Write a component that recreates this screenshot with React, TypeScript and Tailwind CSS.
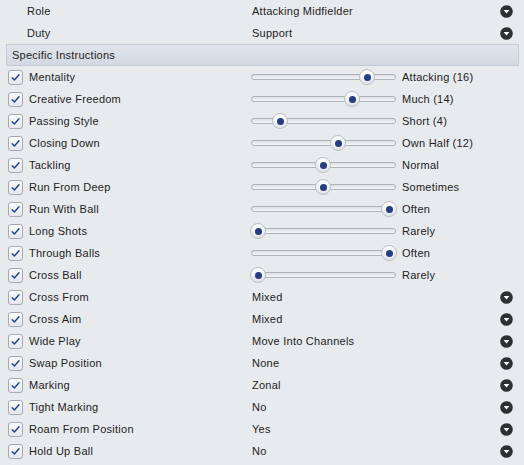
import React from "react";

type Row =
  | { kind: "slider"; label: string; pos: number; text: string }
  | { kind: "select"; label: string; text: string };

const rows: Row[] = [
  { kind: "slider", label: "Mentality", pos: 367, text: "Attacking (16)" },
  { kind: "slider", label: "Creative Freedom", pos: 352, text: "Much (14)" },
  { kind: "slider", label: "Passing Style", pos: 280, text: "Short (4)" },
  { kind: "slider", label: "Closing Down", pos: 338, text: "Own Half (12)" },
  { kind: "slider", label: "Tackling", pos: 323, text: "Normal" },
  { kind: "slider", label: "Run From Deep", pos: 323, text: "Sometimes" },
  { kind: "slider", label: "Run With Ball", pos: 389, text: "Often" },
  { kind: "slider", label: "Long Shots", pos: 258, text: "Rarely" },
  { kind: "slider", label: "Through Balls", pos: 389, text: "Often" },
  { kind: "slider", label: "Cross Ball", pos: 258, text: "Rarely" },
  { kind: "select", label: "Cross From", text: "Mixed" },
  { kind: "select", label: "Cross Aim", text: "Mixed" },
  { kind: "select", label: "Wide Play", text: "Move Into Channels" },
  { kind: "select", label: "Swap Position", text: "None" },
  { kind: "select", label: "Marking", text: "Zonal" },
  { kind: "select", label: "Tight Marking", text: "No" },
  { kind: "select", label: "Roam From Position", text: "Yes" },
  { kind: "select", label: "Hold Up Ball", text: "No" },
];

function DropIcon() {
  return (
    <svg width="13" height="13" viewBox="0 0 13 13" className="shrink-0">
      <circle cx="6.5" cy="6.5" r="6.3" fill="#2e2f31" />
      <path d="M3.6 5 L9.4 5 L6.5 8.6 Z" fill="#ffffff" />
    </svg>
  );
}

function Check() {
  return (
    <div className="w-[15px] h-[15px] shrink-0 rounded-[3px] border border-[#a3aab3] bg-gradient-to-b from-[#fbfcfd] to-[#e4e7eb] flex items-center justify-center">
      <svg width="11" height="11" viewBox="0 0 11 11">
        <path d="M2.2 5.8 L4.4 8 L9 2.8" fill="none" stroke="#27468a" strokeWidth="1.5" strokeLinecap="round" strokeLinejoin="round" />
      </svg>
    </div>
  );
}

function Slider({ pos }: { pos: number }) {
  const left = pos - 251;
  return (
    <div className="relative w-[145px] h-[16px] shrink-0">
      <div className="absolute left-0 right-0 top-[5px] h-[6px] rounded-full border border-[#aeb3b9] bg-gradient-to-b from-[#dcdfe3] to-[#f5f6f8]" />
      <div
        className="absolute top-0 w-[16px] h-[16px] -ml-[8px] rounded-full border border-[#b9bec5] bg-gradient-to-b from-[#ffffff] to-[#e1e4e8] flex items-center justify-center"
        style={{ left }}
      >
        <div className="w-[7px] h-[7px] rounded-full bg-[#233f80]" />
      </div>
    </div>
  );
}

export default function App() {
  return (
    <div
      className="w-[524px] h-[465px] bg-[#e8ebee] text-[#222222] text-[11px] tracking-[0.25px] overflow-hidden"
      style={{ fontFamily: '"Liberation Sans", Arial, sans-serif' }}
    >
      <div className="flex h-[22px] items-center">
        <div className="w-[252px] pl-[27px]">Role</div>
        <div className="flex-1">Attacking Midfielder</div>
        <div className="mr-[11px]"><DropIcon /></div>
      </div>
      <div className="flex h-[22px] items-center">
        <div className="w-[252px] pl-[27px]">Duty</div>
        <div className="flex-1">Support</div>
        <div className="mr-[11px]"><DropIcon /></div>
      </div>
      <div className="ml-[6px] mr-[5px] h-[22px] flex items-center pl-[5px] border border-[#c5ccd5] bg-gradient-to-b from-[#e0e5eb] to-[#d2d9e2]">
        Specific Instructions
      </div>
      {rows.map((r, i) => (
        <div key={i} className="flex h-[22px] items-center">
          <div className="w-[251px] flex items-center pl-[8px] gap-[6px]">
            <Check />
            <span>{r.label}</span>
          </div>
          {r.kind === "slider" ? (
            <div className="flex items-center">
              <Slider pos={r.pos} />
              <span className="ml-[6px]">{r.text}</span>
            </div>
          ) : (
            <>
              <div className="flex-1 pl-[1px]">{r.text}</div>
              <div className="mr-[11px]"><DropIcon /></div>
            </>
          )}
        </div>
      ))}
    </div>
  );
}
